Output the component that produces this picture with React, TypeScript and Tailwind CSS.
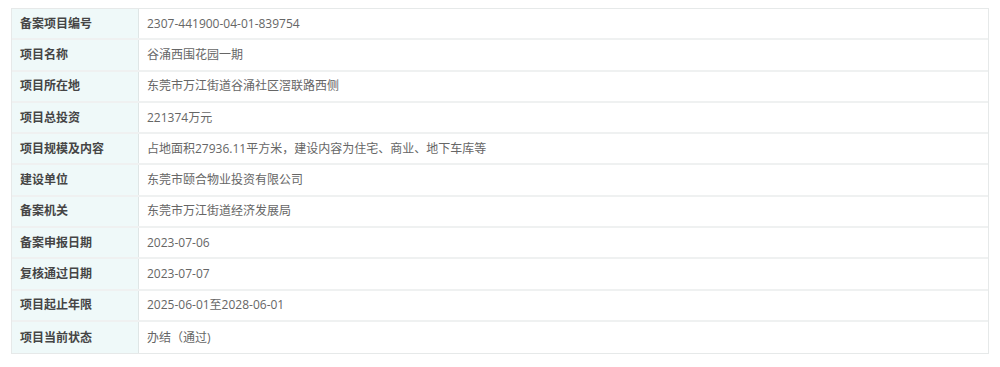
import React from 'react';

const rows: [string, string][] = [
  ['备案项目编号', '2307-441900-04-01-839754'],
  ['项目名称', '谷涌西围花园一期'],
  ['项目所在地', '东莞市万江街道谷涌社区滘联路西侧'],
  ['项目总投资', '221374万元'],
  ['项目规模及内容', '占地面积27936.11平方米，建设内容为住宅、商业、地下车库等'],
  ['建设单位', '东莞市颐合物业投资有限公司'],
  ['备案机关', '东莞市万江街道经济发展局'],
  ['备案申报日期', '2023-07-06'],
  ['复核通过日期', '2023-07-07'],
  ['项目起止年限', '2025-06-01至2028-06-01'],
  ['项目当前状态', '办结（通过)'],
];

export default function App() {
  return (
    <div
      className="w-[1000px] h-[367px] bg-white pt-2 pl-[11px] pr-[11px]"
      style={{ fontFamily: '"Open Sans", "Noto Sans CJK SC", sans-serif' }}
    >
      <div className="border border-[#e6e9e9] text-[12px]">
        {rows.map(([label, value], i) => (
          <div
            key={label}
            className={`flex h-[31.3px] ${i < rows.length - 1 ? 'border-b-2 border-[#eff1f1]' : ''}`}
          >
            <div className="w-[127px] shrink-0 bg-[#eff9f9] border-r border-[#dfe6e6] flex items-center pl-[8px] font-bold text-[#454545]">
              {label}
            </div>
            <div className="flex-1 flex items-center pl-[8px] text-[#666666]">{value}</div>
          </div>
        ))}
      </div>
    </div>
  );
}
